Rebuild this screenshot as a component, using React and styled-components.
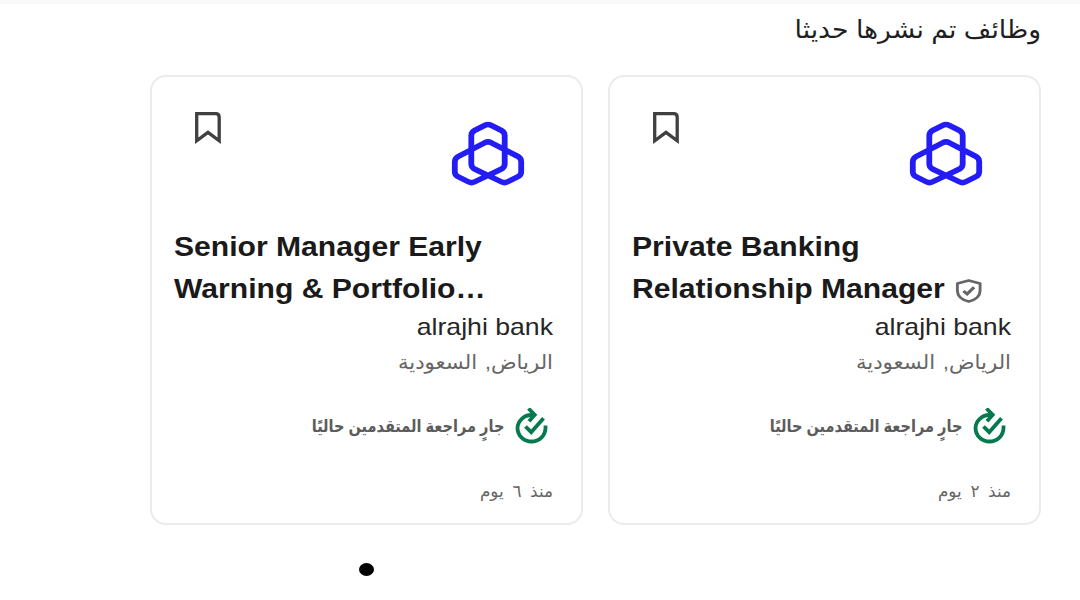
import React from 'react'
import styled, { createGlobalStyle } from 'styled-components'

const jobs = [
  {
    id: 1,
    title: ['Private Banking', 'Relationship Manager'],
    verified: true,
    company: 'alrajhi bank',
    location: 'الرياض, السعودية',
    status: 'جارٍ مراجعة المتقدمين حاليًا',
    posted: 'منذ ٢ يوم',
  },
  {
    id: 2,
    title: ['Senior Manager Early', 'Warning & Portfolio…'],
    verified: false,
    company: 'alrajhi bank',
    location: 'الرياض, السعودية',
    status: 'جارٍ مراجعة المتقدمين حاليًا',
    posted: 'منذ ٦ يوم',
  },
]

const BookmarkIcon = () => (
  <svg width="26" height="33" viewBox="0 0 26 33" fill="none">
    <path d="M1.7 1.6H20.6Q24.2 1.6 24.2 5.2V28.8L13 20.4L1.7 28.8Z" stroke="#404040" strokeWidth="3.3" />
  </svg>
)

const BankLogo = () => (
  <svg width="76" height="65" viewBox="0 0 76 68" preserveAspectRatio="none" fill="none" stroke="#241cf5" strokeWidth="5.8" strokeLinejoin="round">
    <path d="M35 4.4Q38 2.9 41 4.4L51.5 9.9Q54.7 11.7 54.7 15.2V45Q54.7 48.5 51.5 50.2L24.5 63.7Q21.5 65.2 18.5 63.7L8 58.2Q4.8 56.5 4.8 53V42.5Q4.8 39 8 37.2L35 22.6Q38 21.1 41 22.6L68 37.2Q71.2 39 71.2 42.5V53Q71.2 56.5 68 58.2L57.5 63.7Q54.5 65.2 51.5 63.7L24.5 50.2Q21.3 48.5 21.3 45V15.2Q21.3 11.7 24.5 9.9Z" />
  </svg>
)

const ShieldIcon = () => (
  <svg width="24" height="24" viewBox="0 0 24 24" fill="none" stroke="#666">
    <path d="M12 1.5L22.2 4.6V11.5C22.2 17.8 17.5 21 12 22.6C6.5 21 1.8 17.8 1.8 11.5V4.6Z" strokeWidth="2.6" strokeLinejoin="round" />
    <path d="M7.2 12L10.6 15L16.8 8.2" strokeWidth="3" />
  </svg>
)

const ReviewIcon = () => (
  <svg width="34" height="36" viewBox="0 0 34 36" fill="none" stroke="#057a4f" strokeWidth="3.8">
    <path d="M20.5 7H17.5A14 13.500 0 0 0 3.5 20A14 13.500 0 0 0 31.5 20V17.5" />
    <path d="M14.5 0.5L20.7 6.9L15 13.2" />
    <path d="M11.5 18.5L17.2 24.2L29.5 10.2" />
  </svg>
)

export default function App () {
  return (
    <Page dir="rtl">
      <GlobalStyle />
      <Heading $x={1.065}>وظائف تم نشرها حديثا</Heading>
      <Cards>
        {jobs.map(job => (
          <Card key={job.id}>
            <CardTop>
              <BankLogo />
              <SaveButton aria-label="save"><BookmarkIcon /></SaveButton>
            </CardTop>
            <Title dir="ltr">
              <TitleLine>{job.title[0]}</TitleLine>
              <TitleLine>
                {job.title[1]}
                {job.verified && <ShieldIcon />}
              </TitleLine>
            </Title>
            <Company>{job.company}</Company>
            <Location $x={1.06}>{job.location}</Location>
            <Status>
              <ReviewIcon />
              <StatusText $x={0.855}>{job.status}</StatusText>
            </Status>
            <Posted $x={0.99}>{job.posted}</Posted>
          </Card>
        ))}
      </Cards>
      <Pager><Dot /></Pager>
    </Page>
  )
}

const GlobalStyle = createGlobalStyle`
  * {
    box-sizing: border-box;
  }

  body {
    margin: 0;
    background: #fff;
    font-family: "Liberation Sans", "DejaVu Sans", sans-serif;
  }
`

const Page = styled.main`
  width: 1080px;
  height: 600px;
  overflow: hidden;
  border-top: 4px solid #f8f8f8;
  padding-right: 39px;
`

// horizontal stretch keeps each line at its intended width
const Line = styled.p`
  margin: 0;
  white-space: nowrap;
  transform: scaleX(${({ $x }) => $x || 1.11});
  transform-origin: right center;
`

const Heading = styled(Line)`
  height: 71px;
  line-height: 51px;
  font-size: 25px;
  color: #1f1f1f;
`

const Cards = styled.section`
  display: flex;
  gap: 25px;
`

const Card = styled.article`
  width: 433px;
  height: 450px;
  flex: none;
  border: 2px solid #ebebeb;
  border-radius: 16px;
  padding: 34px 28px 0 22px;
`

const CardTop = styled.div`
  display: flex;
  justify-content: space-between;
  height: 115px;
  padding: 10px 27px 0 21px;
`

const SaveButton = styled.button`
  width: 26px;
  height: 33px;
  margin-top: -9px;
  padding: 0;
  border: none;
  background: none;
  cursor: pointer;
`

const Title = styled.h3`
  margin: 0;
  height: 84px;
  font-size: 27px;
  font-weight: 700;
  line-height: 42px;
  color: #1a1a1a;
`

const TitleLine = styled.span`
  display: flex;
  align-items: center;
  gap: 9px;
  height: 42px;
  white-space: nowrap;
  transform: scaleX(1.115);
  transform-origin: left center;

  svg {
    flex: none;
    margin-top: 4px;
  }
`

const Company = styled(Line)`
  height: 34px;
  line-height: 34px;
  font-size: 24px;
  color: #262626;
`

const Location = styled(Line)`
  height: 36px;
  line-height: 36px;
  font-size: 20px;
  word-spacing: 2px;
  color: #666;
`

const Status = styled.div`
  display: flex;
  align-items: center;
  gap: 10px;
  height: 36px;
  margin-top: 28px;
  padding-right: 5px;
`

const StatusText = styled(Line)`
  font-size: 17px;
  font-weight: 700;
  color: #5c5c5c;
`

const Posted = styled(Line)`
  margin-top: 30px;
  line-height: 36px;
  font-size: 17px;
  word-spacing: 4px;
  color: #666;
`

const Pager = styled.nav`
  display: flex;
  justify-content: flex-end;
  padding: 38px 0 0 359px;
`

const Dot = styled.span`
  width: 15px;
  height: 13px;
  border-radius: 50%;
  background: #000;
`
